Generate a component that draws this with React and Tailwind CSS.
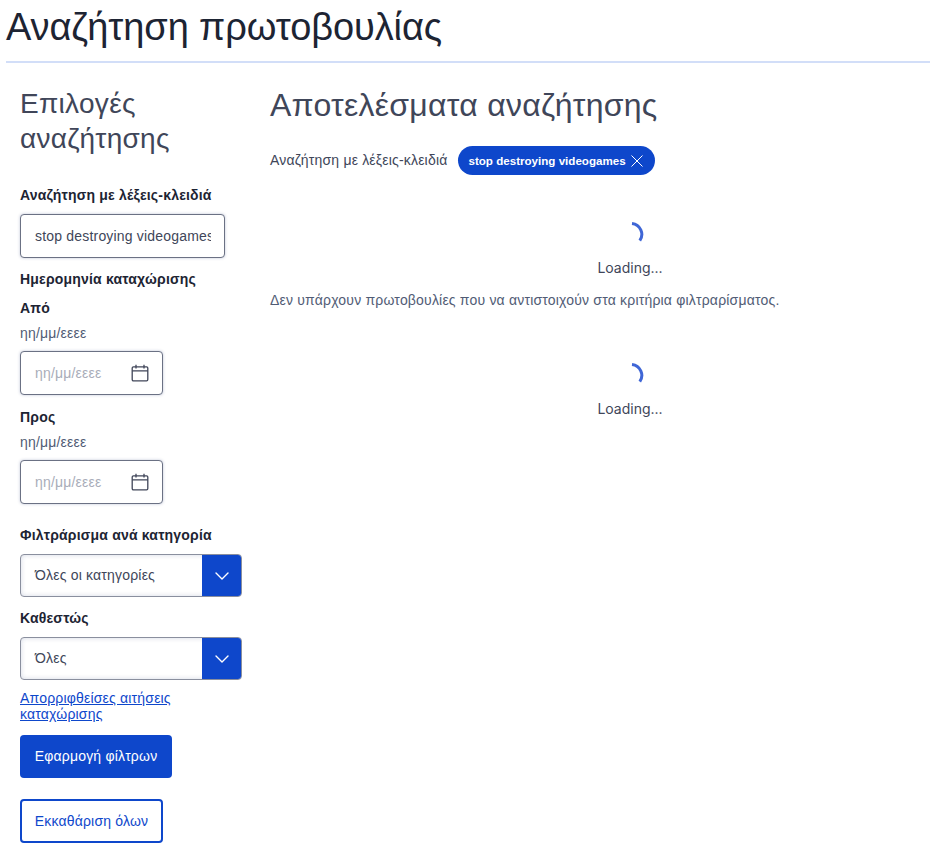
import { ChevronDown } from "lucide-react";

const font = { fontFamily: "'Liberation Sans', Arial, sans-serif", letterSpacing: "0.19px" };

function CalendarIcon() {
  return (
    <svg width="18" height="18" viewBox="0 0 18 18" fill="none" stroke="#404659" strokeWidth="1.3">
      <rect x="1.2" y="2.8" width="15.6" height="14" rx="1.2" />
      <path d="M1.2 6.8h15.6M5 .8v3.6M13 .8v3.6" />
    </svg>
  );
}

function Spinner() {
  return (
    <div className="ml-[60px] flex flex-col items-center">
      <svg width="26" height="26" viewBox="0 0 26 26" fill="none" className="ml-[2px]">
        <path d="M14 2.4A11 11 0 0 1 21.8 19.6" stroke="#3f66d6" strokeWidth="3" />
      </svg>
      <p className="mt-[11px] font-['Inter'] text-[14px] leading-[20px] tracking-normal text-[#404659]">Loading...</p>
    </div>
  );
}

function DateField({ label }) {
  return (
    <div>
      <p className="text-[14px] leading-[20px] font-bold text-[#1d2433]">{label}</p>
      <p className="mt-[5px] text-[14px] leading-[20px] text-[#515c75]">ηη/μμ/εεεε</p>
      <div className="mt-[8px] flex h-[44px] w-[143px] items-center justify-between rounded-[4px] border border-[#6b7184] bg-white pl-[14px] pr-[13px] shadow-[0_0_3px_rgba(40,60,120,0.3)]">
        <span className="text-[14px] text-[#a9adb9]">ηη/μμ/εεεε</span>
        <CalendarIcon />
      </div>
    </div>
  );
}

function SelectField({ value }) {
  return (
    <div className="flex h-[43px] w-[222px] overflow-hidden rounded-[4px] border border-[#8a8f9e] bg-white shadow-[inset_0_0_5px_rgba(40,60,120,0.2)]">
      <div className="flex flex-1 items-center pl-[14px] text-[14px] text-[#404659]">{value}</div>
      <div className="flex w-[39px] items-center justify-center bg-[#0e47cb]">
        <ChevronDown size={24} strokeWidth={1.4} color="#ffffff" />
      </div>
    </div>
  );
}

export default function App() {
  return (
    <div className="min-h-[868px] overflow-hidden bg-white text-[#1d2433]" style={font}>
      <div className="pl-[6px]">
        <h1 className="pt-[5px] text-[38px] leading-[45px] tracking-[-0.1px] text-[#1d2433]">Αναζήτηση πρωτοβουλίας</h1>
        <div className="mt-[11px] h-[2px] bg-[#d2def8]"></div>
      </div>

      <div className="flex pl-[20px] pt-[23px]">
        {/* Sidebar */}
        <aside className="w-[250px] shrink-0">
          <h2 className="w-[180px] text-[28px] leading-[35px] tracking-[0.3px] text-[#404659]">Επιλογές αναζήτησης</h2>
          <p className="mt-[29px] text-[14px] leading-[20px] font-bold text-[#1d2433]">Αναζήτηση με λέξεις-κλειδιά</p>
          <div className="mt-[9px] flex h-[44px] w-[205px] items-center overflow-hidden rounded-[4px] border border-[#6b7184] bg-white pl-[14px] pr-[13px] shadow-[0_0_3px_rgba(40,60,120,0.3)]">
            <span className="overflow-hidden whitespace-nowrap text-[14px] text-[#404659]">stop destroying videogames</span>
          </div>
          <p className="mt-[11px] text-[14px] leading-[20px] font-bold text-[#1d2433]">Ημερομηνία καταχώρισης</p>
          <div className="mt-[9px]">
            <DateField label="Από" />
          </div>
          <div className="mt-[12px]">
            <DateField label="Προς" />
          </div>
          <p className="mt-[21px] text-[14px] leading-[20px] font-bold text-[#1d2433]">Φιλτράρισμα ανά κατηγορία</p>
          <div className="mt-[9px]">
            <SelectField value="Όλες οι κατηγορίες" />
          </div>
          <p className="mt-[11px] text-[14px] leading-[20px] font-bold text-[#1d2433]">Καθεστώς</p>
          <div className="mt-[9px]">
            <SelectField value="Όλες" />
          </div>
          <a href="#" className="mt-[10px] block w-[200px] text-[14px] leading-[16px] text-[#0e47cb] underline">Απορριφθείσες αιτήσεις καταχώρισης</a>
          <button className="mt-[13px] block h-[43px] w-[152px] rounded-[4px] bg-[#0e47cb] text-[14px] font-medium text-white">Εφαρμογή φίλτρων</button>
          <button className="mt-[21px] block h-[44px] w-[143px] rounded-[4px] border-2 border-[#0e47cb] bg-white text-[14px] text-[#0e47cb]">Εκκαθάριση όλων</button>
        </aside>

        {/* Results */}
        <main className="flex-1">
          <h2 className="text-[32px] leading-[38px] tracking-[0.26px] text-[#404659]">Αποτελέσματα αναζήτησης</h2>
          <div className="mt-[22px] flex items-center gap-[11px]">
            <span className="text-[14px] text-[#404659]">Αναζήτηση με λέξεις-κλειδιά</span>
            <span className="flex h-[29px] items-center gap-[5px] rounded-full bg-[#0e47cb] pl-[10px] pr-[12px] text-[11.6px] font-bold tracking-normal text-white">
              stop destroying videogames
              <svg width="12" height="12" viewBox="0 0 12 12" fill="none" stroke="#ffffff" strokeWidth="1">
                <path d="M.5.5l11 11M11.5.5l-11 11" />
              </svg>
            </span>
          </div>
          <div className="mt-[46px]">
            <Spinner />
          </div>
          <p className="mt-[12px] text-[14px] leading-[20px] text-[#515c75]">Δεν υπάρχουν πρωτοβουλίες που να αντιστοιχούν στα κριτήρια φιλτραρίσματος.</p>
          <div className="mt-[52px]">
            <Spinner />
          </div>
        </main>
      </div>
    </div>
  );
}
